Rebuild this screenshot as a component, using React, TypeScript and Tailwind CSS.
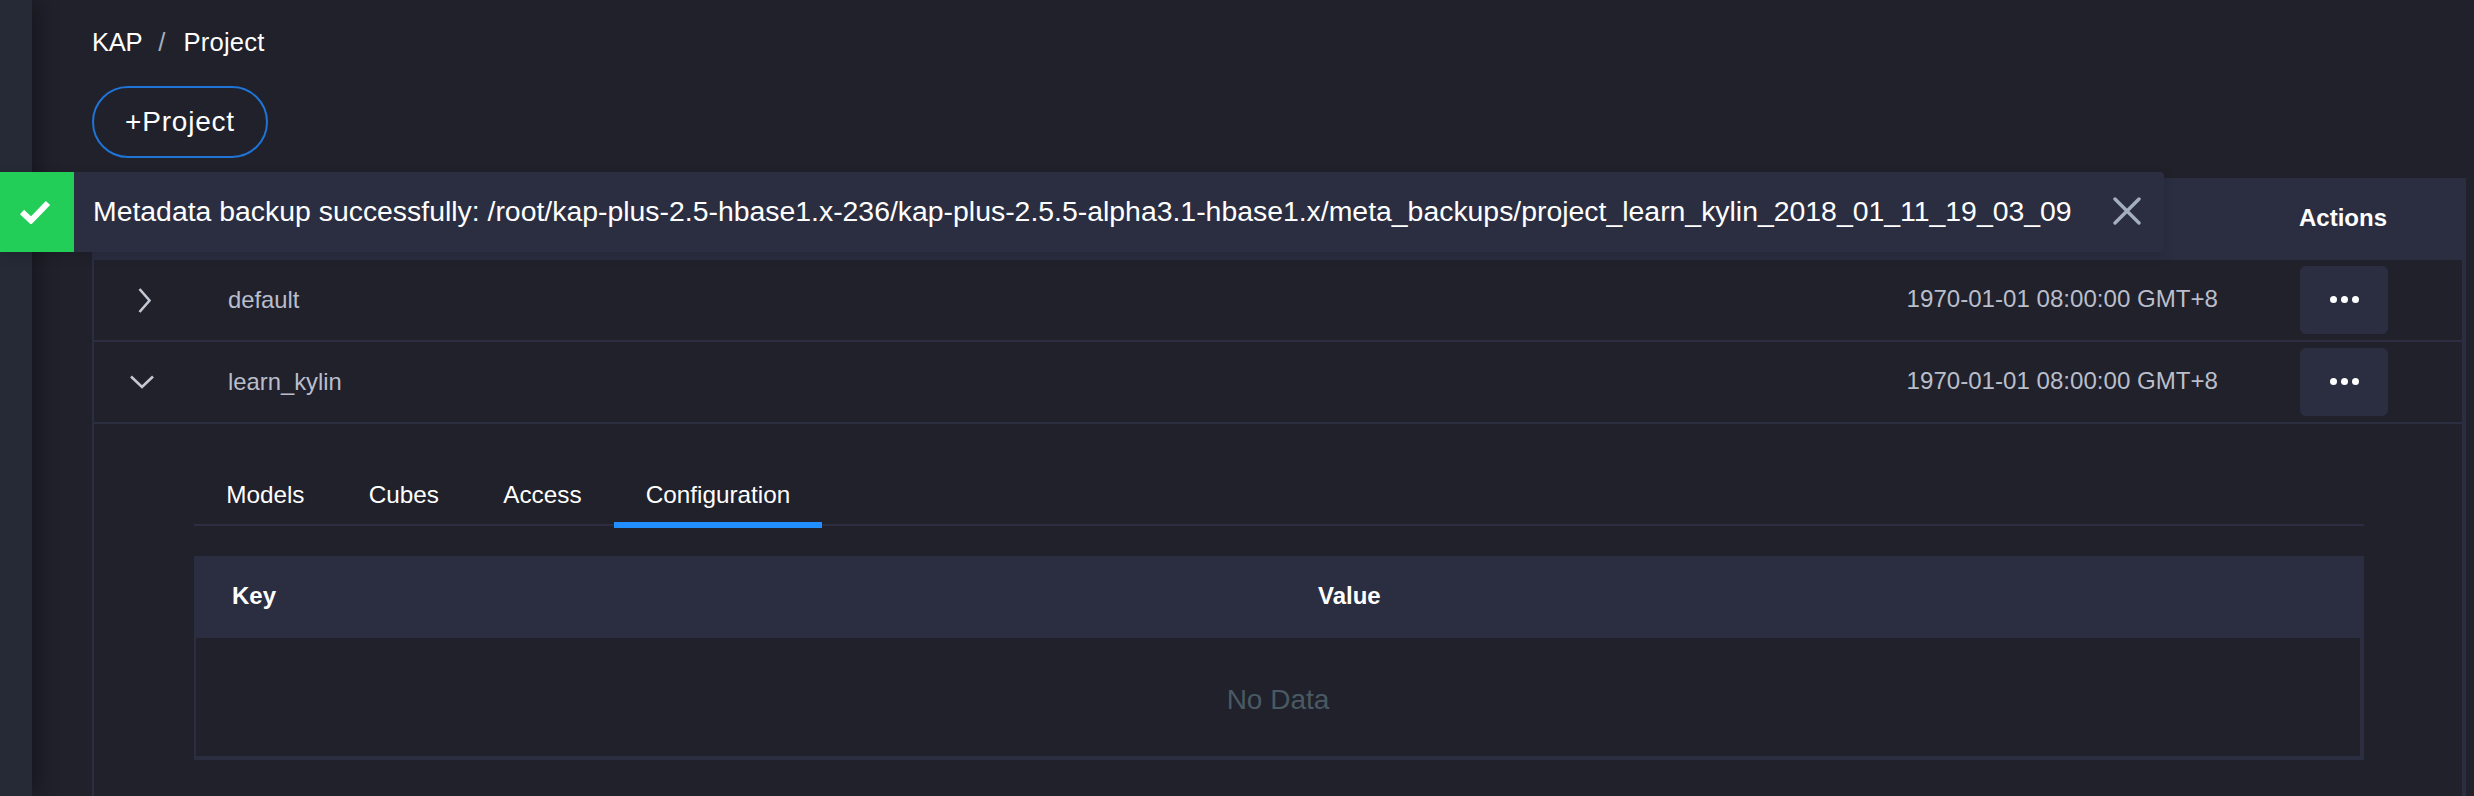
const font = { fontFamily: '"Liberation Sans", Arial, sans-serif' };

function Chevron({ open }: { open?: boolean }) {
  if (open) {
    return (
      <svg width="24" height="14" viewBox="0 0 24 14" fill="none" stroke="#c3c8d4" strokeWidth="2.6" className="ml-[36px]">
        <path d="M1 1.5 L12 12 L23 1.5" />
      </svg>
    );
  }
  return (
    <svg width="13" height="25" viewBox="0 0 13 25" fill="none" stroke="#c3c8d4" strokeWidth="2.6" className="ml-[44px]">
      <path d="M1.5 1 L11.5 12.5 L1.5 24" />
    </svg>
  );
}

function Row({ name, open }: { name: string; open?: boolean }) {
  return (
    <div className="flex h-[82px] items-center border-b-2 border-[#2b2e41]">
      <div className="w-[134px] shrink-0">
        <Chevron open={open} />
      </div>
      <div className="flex-1 pb-[1px] text-[23.8px] text-[#babecb]">{name}</div>
      <div className="mr-[82px] pb-[1px] text-[24.1px] text-[#babecb]">1970-01-01 08:00:00 GMT+8</div>
      <button className="mr-[74px] flex h-[68px] w-[88px] items-center justify-center gap-[4px] rounded-[6px] bg-[#2b2e41] pb-[2px]">
        <span className="h-[7px] w-[7px] rounded-full bg-white" />
        <span className="h-[7px] w-[7px] rounded-full bg-white" />
        <span className="h-[7px] w-[7px] rounded-full bg-white" />
      </button>
    </div>
  );
}

const tabs = ["Models", "Cubes", "Access", "Configuration"];

export default function App() {
  return (
    <div style={font} className="relative flex h-[796px] w-[2474px] overflow-hidden bg-[#20212b] text-white">
      {/* Sidebar */}
      <div className="w-[32px] shrink-0 bg-[#252a36] shadow-[8px_0_20px_rgba(0,0,0,0.3)]" />

      <main className="flex-1 pl-[60px] pr-[8px]">
        <div className="flex h-[86px] items-center pb-[2px] text-[25.6px]">
          <span className="tracking-[-0.3px]">KAP</span>
          <span className="ml-[16px] mr-[18px] text-[#a4afbd]">/</span>
          <span className="tracking-[0.2px]">Project</span>
        </div>
        <button className="flex h-[72px] w-[176px] items-center justify-center rounded-[36px] border-2 border-[#1f74d6] text-[28px] tracking-[0.8px]">
          +Project
        </button>

        {/* Project table */}
        <div className="mt-[20px] h-[618px] border-x-[2px] border-r-[4px] border-[#2b2e41]">
          <div className="flex h-[82px] items-center justify-end bg-[#2b2e41] pb-[2px] pr-[75px] text-[24px] font-bold">
            Actions
          </div>
          <Row name="default" />
          <Row name="learn_kylin" open />

          {/* Expanded row */}
          <div className="ml-[100px] mr-[98px]">
            <div className="mt-[42px] flex h-[60px] border-b-2 border-[#2b2e41] text-[24.3px]">
              {tabs.map((t) => (
                <div
                  key={t}
                  className={
                    t === "Configuration"
                      ? "-mb-[2px] h-[62px] border-b-[6px] border-[#218fff] px-[32px] pt-[11px]"
                      : "px-[32.15px] pt-[11px]"
                  }
                >
                  {t}
                </div>
              ))}
            </div>
            <div className="mt-[30px]">
              <div className="flex h-[82px] items-center bg-[#2b2e41] text-[24px] font-bold">
                <div className="w-[1086px] pb-[2px] pl-[38px]">Key</div>
                <div className="pb-[2px] pl-[38px]">Value</div>
              </div>
              <div className="flex h-[122px] items-center justify-center border-b-[4px] border-l-[2px] border-r-[4px] border-[#2b2e41] pt-[5px] text-[28px] text-[#4a5963]">
                No Data
              </div>
            </div>
          </div>
        </div>
      </main>

      {/* Notification */}
      <div className="absolute left-0 top-[172px] flex h-[80px] w-[2164px] items-center rounded-r-[4px] bg-[#2b2e41] shadow-[0_4px_12px_rgba(0,0,0,0.15)]">
        <div className="flex h-full w-[74px] shrink-0 items-center justify-center bg-[#22cd58]">
          <svg width="32" height="24" viewBox="0 0 32 24" fill="none" stroke="white" strokeWidth="6" className="mr-[4px] mt-[-1px]">
            <path d="M3 12 L12 20.5 L29 3" />
          </svg>
        </div>
        <div className="ml-[19px] flex-1 pb-[2px] text-[28.4px]">
          Metadata backup successfully: /root/kap-plus-2.5-hbase1.x-236/kap-plus-2.5.5-alpha3.1-hbase1.x/meta_backups/project_learn_kylin_2018_01_11_19_03_09
        </div>
        <svg width="28" height="28" viewBox="0 0 28 28" fill="none" stroke="#a4afbd" strokeWidth="3.4" className="mb-[2px] mr-[23px]" strokeLinecap="round">
          <path d="M2 2 L26 26 M26 2 L2 26" />
        </svg>
      </div>
    </div>
  );
}
